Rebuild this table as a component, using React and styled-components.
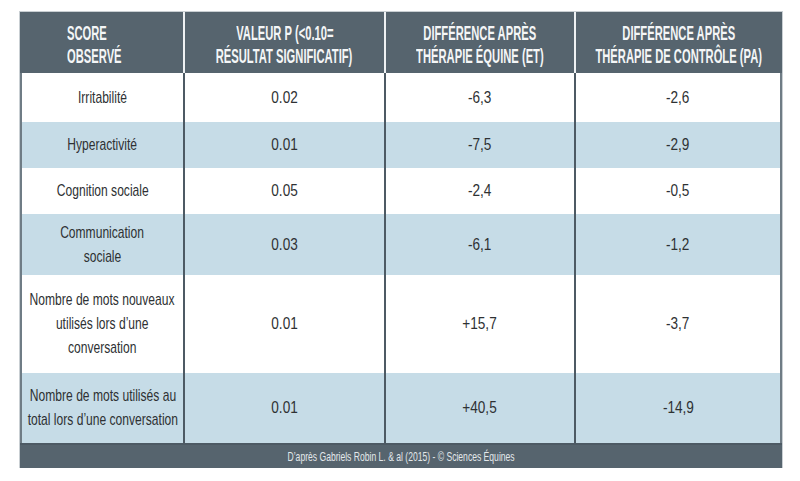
import React from "react";
import styled, { createGlobalStyle } from "styled-components";

const GlobalStyle = createGlobalStyle`
  body {
    margin: 0;
    background: #ffffff;
    font-family: "Liberation Sans", Arial, sans-serif;
  }
`;

const headers = [
  ["SCORE", "OBSERVÉ"],
  ["VALEUR P (<0.10=", "RÉSULTAT SIGNIFICATIF)"],
  ["DIFFÉRENCE APRÈS", "THÉRAPIE ÉQUINE (ET)"],
  ["DIFFÉRENCE APRÈS", "THÉRAPIE DE CONTRÔLE (PA)"],
];

const rows = [
  { h: 49, label: ["Irritabilité"], p: "0.02", et: "-6,3", pa: "-2,6" },
  { h: 46, label: ["Hyperactivité"], p: "0.01", et: "-7,5", pa: "-2,9" },
  { h: 46, label: ["Cognition sociale"], p: "0.05", et: "-2,4", pa: "-0,5" },
  { h: 61, label: ["Communication", "sociale"], p: "0.03", et: "-6,1", pa: "-1,2" },
  {
    h: 98,
    label: ["Nombre de mots nouveaux", "utilisés lors d’une", "conversation"],
    p: "0.01",
    et: "+15,7",
    pa: "-3,7",
  },
  {
    h: 70,
    label: ["Nombre de mots utilisés au", "total lors d’une conversation"],
    p: "0.01",
    et: "+40,5",
    pa: "-14,9",
  },
];

const Page = styled.div`
  padding: 12px 0 0 20px;
`;

const Table = styled.div`
  width: 762px;
  display: grid;
  grid-template-columns: 163px 201px 190px 208px;
  box-shadow: 0 0 0 1px #c9cfd3;
`;

const Squeeze = styled.span`
  display: block;
  width: max-content;
  white-space: nowrap;
  transform: scaleX(${(p) => p.$sx});
  transform-origin: ${(p) => (p.$left ? "left center" : "center center")};
`;

const HeadCell = styled.div`
  height: 61px;
  background: #56646e;
  color: #f4f6f7;
  font-weight: 700;
  font-size: 20px;
  line-height: 23px;
  display: flex;
  flex-direction: column;
  align-items: ${(p) => (p.$first ? "flex-start" : "center")};
  justify-content: center;
  padding-left: ${(p) => (p.$first ? "47px" : "0")};
  padding-top: 4px;
  border-left: ${(p) => (p.$first ? "none" : "2px solid #eef1f3")};
  box-sizing: border-box;
  text-align: center;
  overflow: hidden;
`;

const Cell = styled.div`
  height: ${(p) => p.$h}px;
  background: ${(p) => (p.$alt ? "#c6dce7" : "#ffffff")};
  color: #2e3133;
  font-size: 17px;
  line-height: 24px;
  display: flex;
  flex-direction: column;
  align-items: center;
  justify-content: center;
  text-align: center;
  box-sizing: border-box;
  overflow: hidden;
  border-left: 2px solid ${(p) => (p.$first ? "#6f7c85" : "#4d5a64")};
  border-right: ${(p) => (p.$last ? "2px solid #6f7c85" : "none")};
`;

const Footer = styled.div`
  grid-column: 1 / -1;
  height: 25px;
  background: #56646e;
  color: #e3e8eb;
  font-size: 13px;
  display: flex;
  align-items: center;
  justify-content: center;
  border-top: 2px solid #4d5a64;
  box-sizing: border-box;
`;

const Lines = ({ lines, sx, left }) =>
  lines.map((l, i) => (
    <Squeeze key={i} $sx={sx} $left={left}>
      {l}
    </Squeeze>
  ));

export default function App() {
  return (
    <Page>
      <GlobalStyle />
      <Table>
        {headers.map((h, i) => (
          <HeadCell key={i} $first={i === 0}>
            <Lines lines={h} sx={0.56} left={i === 0} />
          </HeadCell>
        ))}
        {rows.map((r, i) => {
          const alt = i % 2 === 1;
          return (
            <React.Fragment key={i}>
              <Cell $h={r.h} $alt={alt} $first>
                <Lines lines={r.label} sx={0.71} />
              </Cell>
              <Cell $h={r.h} $alt={alt}>
                <Squeeze $sx={0.8}>{r.p}</Squeeze>
              </Cell>
              <Cell $h={r.h} $alt={alt}>
                <Squeeze $sx={0.8}>{r.et}</Squeeze>
              </Cell>
              <Cell $h={r.h} $alt={alt} $last>
                <Squeeze $sx={0.8}>{r.pa}</Squeeze>
              </Cell>
            </React.Fragment>
          );
        })}
        <Footer>
          <Squeeze $sx={0.66}>
            D’après Gabriels Robin L. &amp; al (2015) - © Sciences Équines
          </Squeeze>
        </Footer>
      </Table>
    </Page>
  );
}
